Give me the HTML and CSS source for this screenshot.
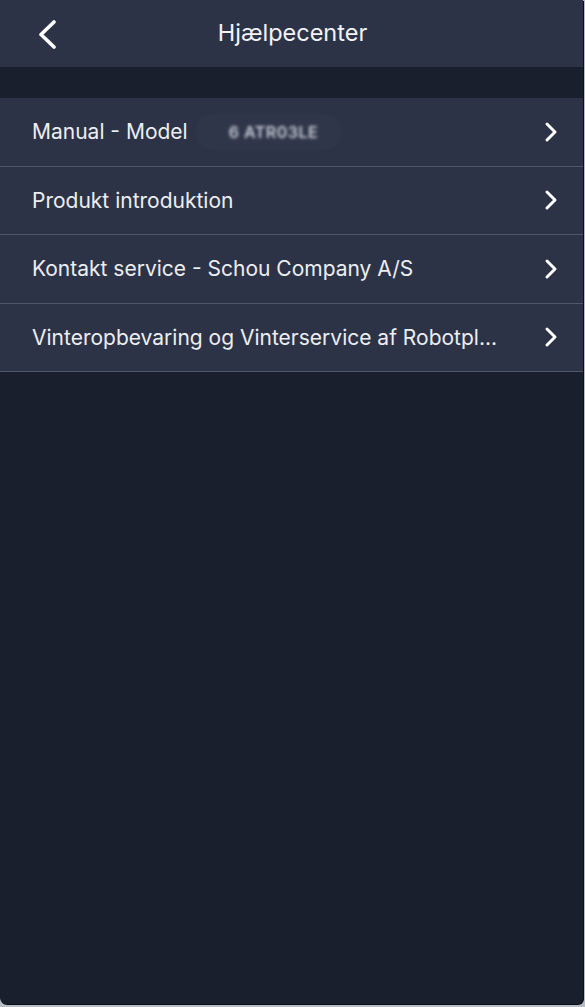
FILE: index.html
```html
<!DOCTYPE html>
<html lang="da">
<head>
<meta charset="utf-8">
<title>Hjælpecenter</title>
<link rel="stylesheet" href="styles.css">
</head>
<body>
<div class="screen">
  <header class="topbar">
    <button class="back" aria-label="Tilbage">
      <svg width="22" height="30" viewBox="0 0 22 30"><path d="M18 3 L5 15.5 L18 28" fill="none" stroke="#ffffff" stroke-width="3.6" stroke-linecap="round" stroke-linejoin="round"/></svg>
    </button>
    <h1 class="title">Hjælpecenter</h1>
    <span class="spacer"></span>
  </header>
  <div class="gap"></div>
  <ul class="list">
    <li class="row">
      <span class="label">Manual - Model <span class="blurred"><span class="blur-text">6 ATR03LE</span></span></span>
      <svg class="chev" width="14" height="22" viewBox="0 0 14 22"><path d="M3 3 L11 11 L3 19" fill="none" stroke="#ffffff" stroke-width="3" stroke-linecap="round" stroke-linejoin="round"/></svg>
    </li>
    <li class="row">
      <span class="label">Produkt introduktion</span>
      <svg class="chev" width="14" height="22" viewBox="0 0 14 22"><path d="M3 3 L11 11 L3 19" fill="none" stroke="#ffffff" stroke-width="3" stroke-linecap="round" stroke-linejoin="round"/></svg>
    </li>
    <li class="row">
      <span class="label">Kontakt service - Schou Company A/S</span>
      <svg class="chev" width="14" height="22" viewBox="0 0 14 22"><path d="M3 3 L11 11 L3 19" fill="none" stroke="#ffffff" stroke-width="3" stroke-linecap="round" stroke-linejoin="round"/></svg>
    </li>
    <li class="row">
      <span class="label">Vinteropbevaring og Vinterservice af Robotpl...</span>
      <svg class="chev" width="14" height="22" viewBox="0 0 14 22"><path d="M3 3 L11 11 L3 19" fill="none" stroke="#ffffff" stroke-width="3" stroke-linecap="round" stroke-linejoin="round"/></svg>
    </li>
  </ul>
</div>
</body>
</html>
```
FILE: styles.css
```css
html, body {
  margin: 0;
  padding: 0;
}
body {
  background: #b8bcc4;
  width: 585px;
  height: 1007px;
  overflow: hidden;
  font-family: Inter, "Liberation Sans", Arial, sans-serif;
}
.screen {
  width: 583px;
  height: 1004px;
  background: #1a1f2d;
  border-radius: 0 0 6px 6px;
  box-shadow: 1px 1px 0 #0c0f1a;
  display: flex;
  flex-direction: column;
  overflow: hidden;
}
.topbar {
  height: 67px;
  background: #2d3346;
  display: flex;
  align-items: center;
  padding: 0 22px 0 36px;
  box-sizing: border-box;
}
.back {
  background: none;
  border: 0;
  padding: 0;
  width: 26px;
  height: 30px;
  display: flex;
  align-items: center;
  justify-content: flex-start;
}
.title {
  flex: 1;
  margin: 0;
  text-align: center;
  color: #f2f3f6;
  font-weight: 400;
  font-size: 23.5px;
  margin-top: -3px;
  padding-right: 12px;
}
.spacer {
  width: 26px;
}
.gap {
  height: 31px;
}
.list {
  list-style: none;
  margin: 0;
  padding: 0;
}
.row {
  height: 67.5px;
  border-bottom: 1px solid #51576a;
  background: #2d3346;
  display: flex;
  align-items: center;
  justify-content: space-between;
  padding: 0 25px 0 32px;
}
.label {
  color: #eceef2;
  font-size: 21px;
  white-space: nowrap;
  display: flex;
  align-items: center;
}
.blurred {
  display: inline-flex;
  align-items: center;
  margin-left: 7px;
  width: 148px;
  height: 36px;
  border-radius: 18px;
  background: #30364a;
  filter: blur(1px);
}
.blur-text {
  margin-left: 34px;
  font-size: 16px;
  font-weight: 600;
  color: #c9cdd7;
  letter-spacing: 0.5px;
  filter: blur(0.9px);
}
.chev {
  flex: none;
}
```
